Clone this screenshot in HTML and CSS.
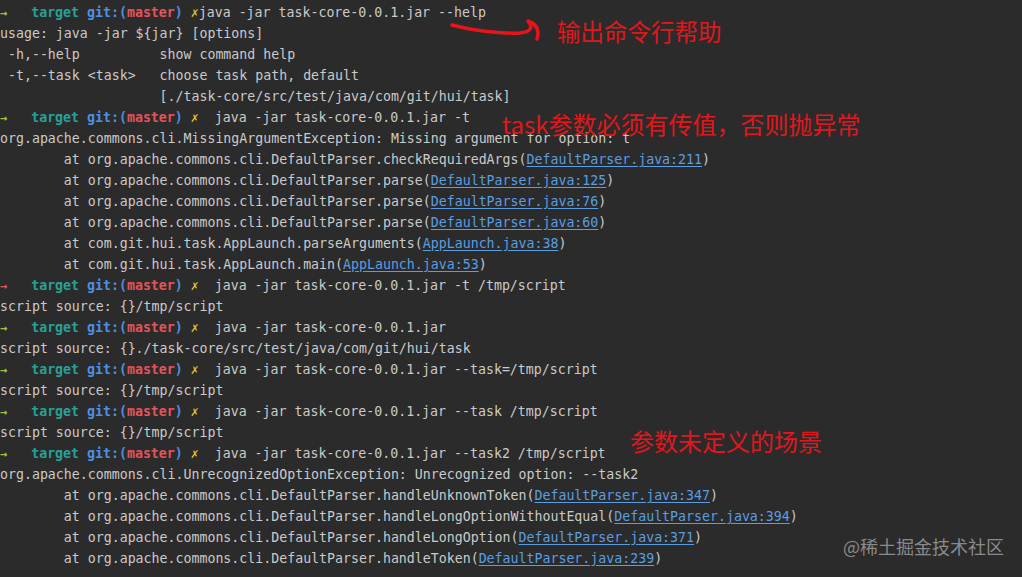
FILE: index.html
```html
<!DOCTYPE html>
<html lang="en">
<head>
  <meta charset="UTF-8">
  <meta name="viewport" content="width=device-width, initial-scale=1.0">
  <title>task-core cli</title>
  <link rel="stylesheet" href="styles.css">
</head>
<body>
  <div class="screen">
    <pre class="term"><div><span class="arrow">→</span>   <span class="dir">target</span> <span class="git">git:(</span><span class="branch">master</span><span class="git">)</span> <span class="dirty">✗</span>java -jar task-core-0.0.1.jar --help</div><div>usage: java -jar ${jar} [options]</div><div> -h,--help          show command help</div><div> -t,--task &lt;task&gt;   choose task path, default</div><div>                    [./task-core/src/test/java/com/git/hui/task]</div><div><span class="arrow">→</span>   <span class="dir">target</span> <span class="git">git:(</span><span class="branch">master</span><span class="git">)</span> <span class="dirty">✗</span>  java -jar task-core-0.0.1.jar -t</div><div>org.apache.commons.cli.MissingArgumentException: Missing argument for option: t</div><div>        at org.apache.commons.cli.DefaultParser.checkRequiredArgs(<a class="link">DefaultParser.java:211</a>)</div><div>        at org.apache.commons.cli.DefaultParser.parse(<a class="link">DefaultParser.java:125</a>)</div><div>        at org.apache.commons.cli.DefaultParser.parse(<a class="link">DefaultParser.java:76</a>)</div><div>        at org.apache.commons.cli.DefaultParser.parse(<a class="link">DefaultParser.java:60</a>)</div><div>        at com.git.hui.task.AppLaunch.parseArguments(<a class="link">AppLaunch.java:38</a>)</div><div>        at com.git.hui.task.AppLaunch.main(<a class="link">AppLaunch.java:53</a>)</div><div><span class="arrow fail">→</span>   <span class="dir">target</span> <span class="git">git:(</span><span class="branch">master</span><span class="git">)</span> <span class="dirty">✗</span>  java -jar task-core-0.0.1.jar -t /tmp/script</div><div>script source: {}/tmp/script</div><div><span class="arrow">→</span>   <span class="dir">target</span> <span class="git">git:(</span><span class="branch">master</span><span class="git">)</span> <span class="dirty">✗</span>  java -jar task-core-0.0.1.jar</div><div>script source: {}./task-core/src/test/java/com/git/hui/task</div><div><span class="arrow">→</span>   <span class="dir">target</span> <span class="git">git:(</span><span class="branch">master</span><span class="git">)</span> <span class="dirty">✗</span>  java -jar task-core-0.0.1.jar --task=/tmp/script</div><div>script source: {}/tmp/script</div><div><span class="arrow">→</span>   <span class="dir">target</span> <span class="git">git:(</span><span class="branch">master</span><span class="git">)</span> <span class="dirty">✗</span>  java -jar task-core-0.0.1.jar --task /tmp/script</div><div>script source: {}/tmp/script</div><div><span class="arrow">→</span>   <span class="dir">target</span> <span class="git">git:(</span><span class="branch">master</span><span class="git">)</span> <span class="dirty">✗</span>  java -jar task-core-0.0.1.jar --task2 /tmp/script</div><div>org.apache.commons.cli.UnrecognizedOptionException: Unrecognized option: --task2</div><div>        at org.apache.commons.cli.DefaultParser.handleUnknownToken(<a class="link">DefaultParser.java:347</a>)</div><div>        at org.apache.commons.cli.DefaultParser.handleLongOptionWithoutEqual(<a class="link">DefaultParser.java:394</a>)</div><div>        at org.apache.commons.cli.DefaultParser.handleLongOption(<a class="link">DefaultParser.java:371</a>)</div><div>        at org.apache.commons.cli.DefaultParser.handleToken(<a class="link">DefaultParser.java:239</a>)</div></pre>

    <svg class="scribble" width="100" height="30" viewBox="0 0 100 30">
      <path d="M2 8 C20 13 50 17 70 16 C80 15 84 11 78 4 C86 7 90 13 87 22" fill="none" stroke="#e8141a" stroke-width="3.5" stroke-linecap="round" stroke-linejoin="round"/>
    </svg>
    <span class="note note-help">输出命令行帮助</span>
    <span class="note note-task">task参数必须有传值，否则抛异常</span>
    <span class="note note-undef">参数未定义的场景</span>
    <span class="watermark">@稀土掘金技术社区</span>
  </div>
</body>
</html>
```

FILE: styles.css
```css
html, body {
  margin: 0;
  background: #2b2b2b;
}
.screen {
  position: relative;
  width: 1022px;
  height: 577px;
  overflow: hidden;
  background: #2b2b2b;
}
.term {
  margin: 0;
  padding: 2px 0 0 0;
  font-family: "DejaVu Sans Mono", monospace;
  font-size: 13.25px;
  line-height: 21px;
  color: #cacaca;
}
.term div {
  height: 21px;
}
.arrow {
  color: #a8c23a;
  font-size: 12px;
  font-weight: bold;
  line-height: 1;
}
.arrow.fail {
  color: #e4574f;
}
.dir {
  color: #27a195;
  font-weight: bold;
}
.git {
  color: #4f8fe3;
  font-weight: bold;
}
.branch {
  color: #e5535a;
  font-weight: bold;
}
.dirty {
  color: #d8c232;
  line-height: 1;
}
.link {
  color: #5a9ee2;
  text-decoration: underline;
  text-underline-offset: 2px;
}
.note {
  position: absolute;
  color: #e3161c;
  font-family: "Noto Sans CJK SC", "Noto Sans", sans-serif;
  font-size: 24px;
  line-height: 1;
  white-space: nowrap;
}
.note-help {
  left: 557px;
  top: 20px;
  font-size: 23.5px;
}
.note-task {
  left: 502px;
  top: 112px;
}
.note-undef {
  left: 630px;
  top: 429px;
}
.scribble {
  position: absolute;
  left: 450px;
  top: 17px;
}
.watermark {
  position: absolute;
  left: 843px;
  top: 537px;
  color: #8a8a8a;
  font-family: "Noto Sans CJK SC", sans-serif;
  font-size: 18px;
  line-height: 1;
  white-space: nowrap;
}
```
